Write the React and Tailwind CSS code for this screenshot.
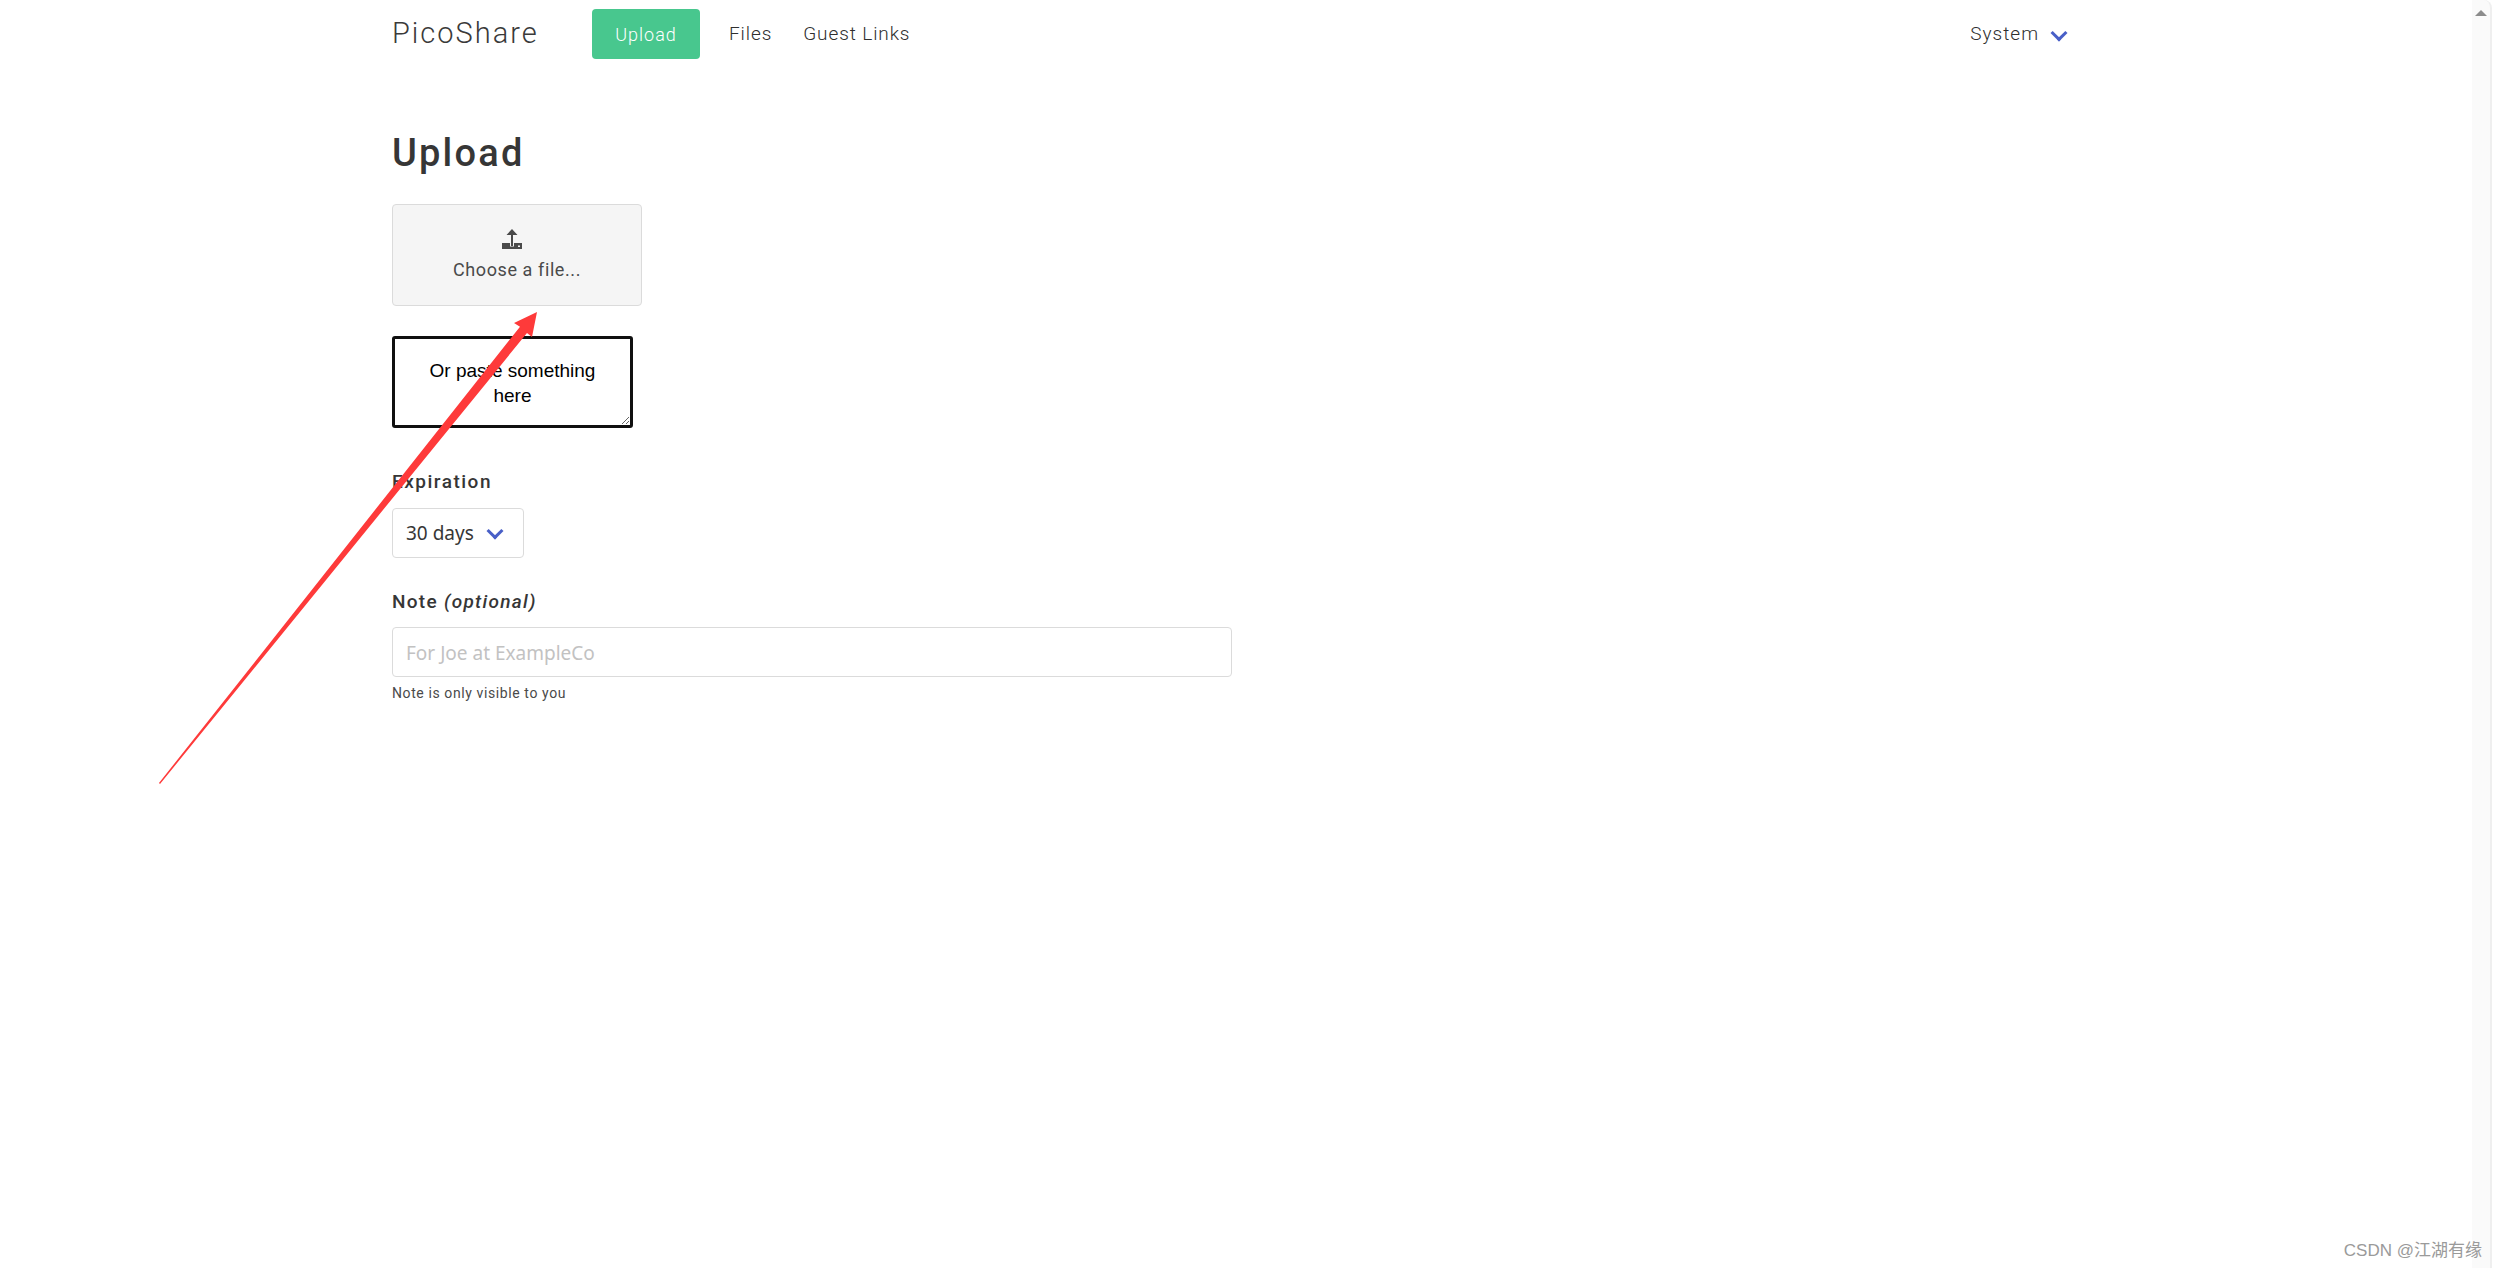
function Chevron({ className }) {
  return <span className={`block w-[12px] h-[12px] border-l-[3px] border-b-[3px] border-[#485fc7] -rotate-45 ${className}`} />
}

function UploadIcon() {
  return (
    <svg width="20" height="20" viewBox="0 0 20 20" className="block mr-[10px]">
      <path d="M0 14H20V20H0Z" fill="#4a4a4a" />
      <rect x="8" y="14" width="4" height="3.5" fill="#f5f5f5" />
      <path d="M10 0L15.5 6H11V17H9V6H4.5Z" fill="#4a4a4a" />
      <rect x="16" y="16.5" width="2" height="1.5" fill="#f5f5f5" />
    </svg>
  )
}

function Arrow() {
  return (
    <svg width="2497" height="1268" className="absolute inset-0 pointer-events-none">
      <path d="M159 783L520 326.7L514 323L537 312L532 337L527 333L160 784Z" fill="#fe3a3a" />
    </svg>
  )
}

function Scrollbar() {
  return (
    <div className="w-[25px] h-full flex-none flex">
      <div className="w-[20px] h-full bg-[#fafafa] border-r-2 border-[#efefef] rounded-tr-[8px] flex flex-col items-center pt-[10px]">
        <span className="w-0 h-0 border-x-[6px] border-x-transparent border-b-[6px] border-b-[#8c8c8c]" />
      </div>
    </div>
  )
}

export default function App() {
  return (
    <div className="relative flex h-[1268px] overflow-hidden bg-white text-[#4a4a4a] font-['Roboto',sans-serif]">
      <div className="flex-1 pl-[392px]">
        <div className="w-[1713px]">
          <nav className="flex items-center h-[68px]">
            <div className="text-[29px] font-light text-[#3a3a3a] tracking-[2px] w-[200px]">PicoShare</div>
            <div className="h-[50px] w-[108px] bg-[#48c78e] rounded-[4px] text-white text-[18px] tracking-[1px] font-light flex items-center justify-center">Upload</div>
            <div className="ml-[29px] text-[19px] font-light text-[#2f2f2f] tracking-[0.9px]">Files</div>
            <div className="ml-[31px] text-[19px] font-light text-[#2f2f2f] tracking-[0.9px]">Guest Links</div>
            <div className="ml-auto flex items-center mr-[40px] text-[19px] font-light text-[#2f2f2f] tracking-[1px]">
              <span>System</span>
              <Chevron className="ml-[14px] mt-[-2px]" />
            </div>
          </nav>

          <h1 className="text-[38px] font-medium tracking-[2.2px] text-[#363636] mt-[61px] leading-[48px]">Upload</h1>

          <div className="mt-[27px] w-[250px] h-[102px] bg-[#f5f5f5] border border-[#dbdbdb] rounded-[4px] flex flex-col items-center pt-[24px]">
            <UploadIcon />
            <div className="text-[18px] tracking-[0.6px] mt-[8px] leading-[26px]">Choose a file...</div>
          </div>

          <textarea
            className="block mt-[30px] w-[241px] h-[92px] border-[3px] border-[#101010] rounded-[3px] text-center text-black text-[19px] leading-[25px] px-[28px] pt-[19px] font-['Liberation_Sans',sans-serif] outline-none"
            defaultValue="Or paste something here"
          />

          <div className="mt-[40px] text-[19px] font-medium tracking-[1.5px] text-[#363636] leading-[27px]">Expiration</div>
          <div className="mt-[13px] w-[132px] h-[50px] border border-[#dbdbdb] rounded-[4px] flex items-center pl-[13px] text-[19px] text-[#363636] font-['Noto_Sans',sans-serif]">
            <span>30 days</span>
            <Chevron className="ml-[15px] -mt-[5px]" />
          </div>

          <div className="mt-[30px] text-[19px] font-medium tracking-[1.3px] text-[#363636] leading-[27px]">Note <em>(optional)</em></div>
          <input
            className="block mt-[12px] w-[840px] h-[50px] border border-[#dbdbdb] rounded-[4px] pl-[13px] pt-[2px] text-[19px] font-['Noto_Sans',sans-serif] placeholder:text-[#c2c2c2] outline-none"
            placeholder="For Joe at ExampleCo"
          />
          <p className="mt-[7px] text-[14px] tracking-[0.6px] leading-[18px]">Note is only visible to you</p>
        </div>
      </div>
      <Scrollbar />

      <Arrow />
      <div className="absolute right-[15px] bottom-[5px] text-[17px] text-[#9a9a9a] font-['Liberation_Sans','Noto_Sans_CJK_SC',sans-serif]">CSDN @江湖有缘</div>
    </div>
  )
}
